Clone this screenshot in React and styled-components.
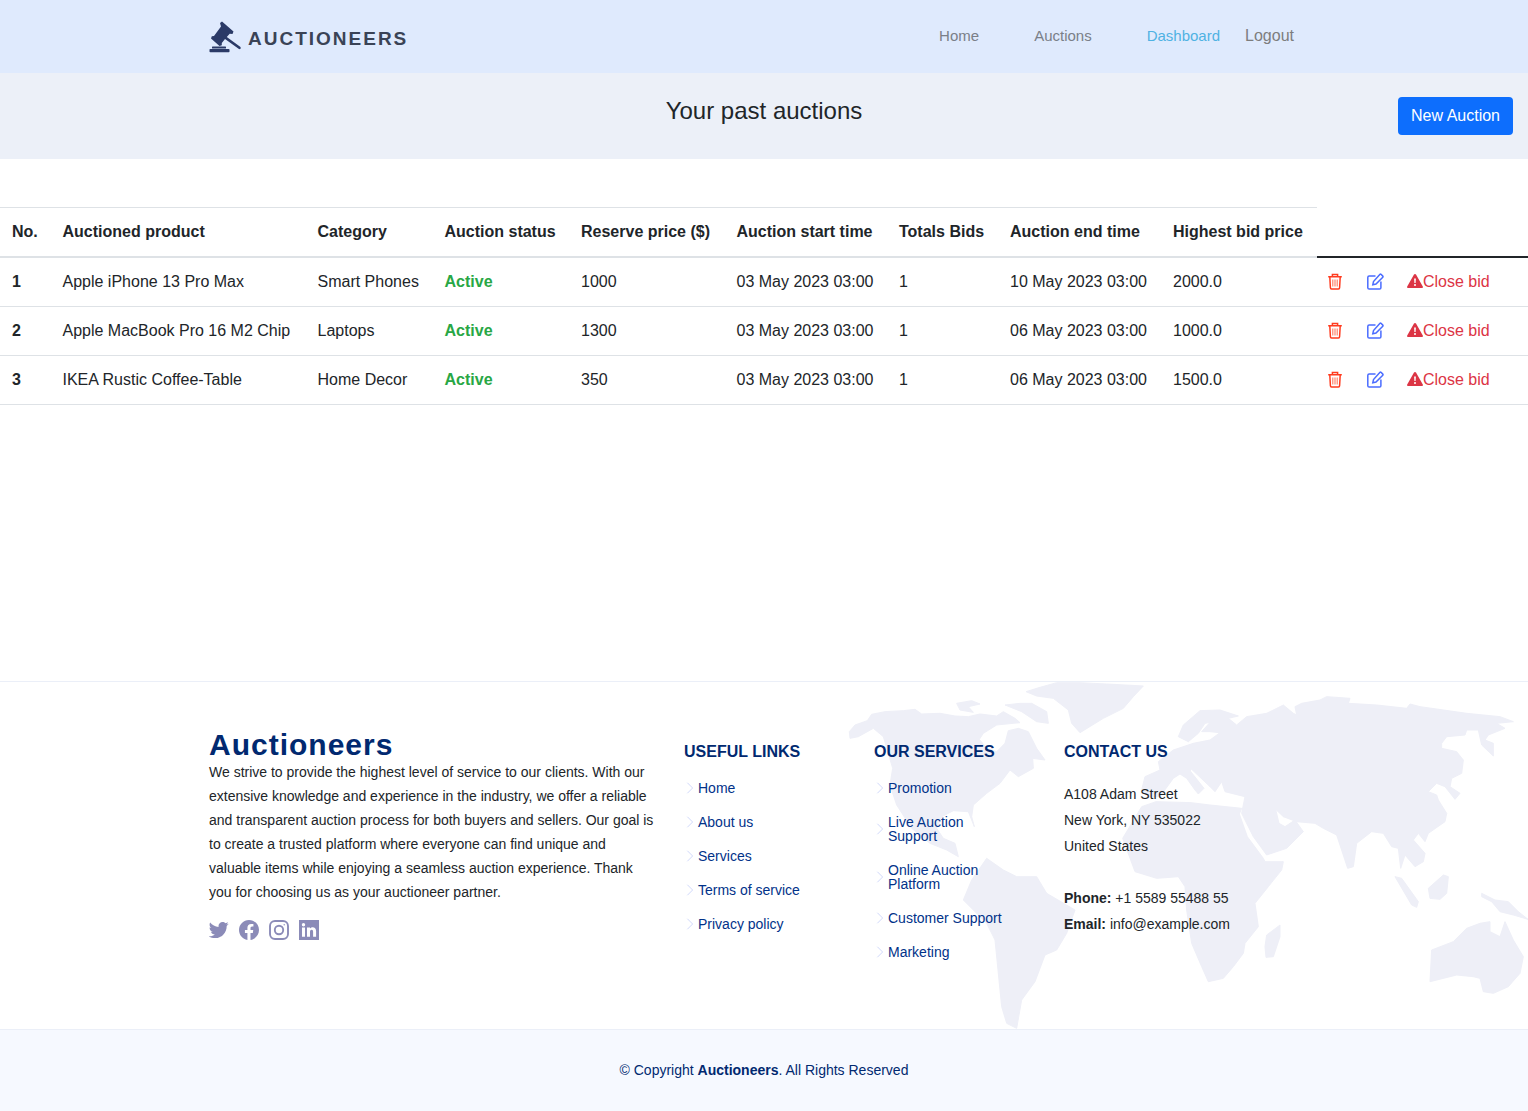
import React from 'react';
import styled, { createGlobalStyle } from 'styled-components';

const Global = createGlobalStyle`
  * { box-sizing: border-box; }
  body { margin: 0; background: #fff; color: #212529; font-family: "Liberation Sans", Arial, sans-serif; font-size: 16px; line-height: 1.5; }
`;
const Page = styled.div`display:flex;flex-direction:column;min-height:1111px;`;
const Header = styled.header`height:73px;background:#dfeafd;display:flex;align-items:center;padding:0 234px 0 204px;`;
const Logo = styled.div`display:flex;align-items:center;margin-right:auto;`;
const LogoText = styled.span`font-size:19px;font-weight:700;letter-spacing:2px;color:#3a4356;line-height:24px;margin-top:4px;`;
const Nav = styled.nav`display:flex;align-items:center;margin-top:-1px;`;
const NavLink = styled.a`font-size:15px;line-height:20px;color:${p=>p.$active?'#4fb2e3':'#7a7f88'};margin-right:${p=>p.$gap}px;`;
const LogoutLink = styled.a`font-size:16px;color:#7d7d7d;line-height:24px;`;
const TitleBand = styled.section`height:86px;background:#ecf0f8;position:relative;display:flex;justify-content:center;padding-top:21px;`;
const Title = styled.h1`margin:0;font-size:24px;font-weight:400;line-height:33px;color:#212529;`;
const NewButton = styled.button`position:absolute;right:15px;top:24px;height:38px;padding:0 13px;border:0;border-radius:4px;background:#0d6efd;color:#fff;font:16px "Liberation Sans",Arial,sans-serif;`;
const Main = styled.main`padding-top:48px;height:522px;`;
const Table = styled.table`width:1528px;table-layout:fixed;border-collapse:collapse;`;
const Column = styled.col`width:${p=>p.$w}px;`;
const Th = styled.th`padding:12px;text-align:left;font-weight:700;white-space:nowrap;border-top:1px solid #dee2e6;border-bottom:2px solid #dee2e6;line-height:24px;`;
const Body = styled.tbody`border-top:2px solid #212529;`;
const Row = styled.tr`border-bottom:1px solid #dee2e6;`;
const Td = styled.td`padding:12px;white-space:nowrap;line-height:24px;`;
const Strong = styled(Td)`font-weight:700;`;
const Status = styled(Td)`font-weight:700;color:#28a745;`;
const IconCell = styled(Td)`padding:0 0 2px ${p=>p.$pad}px;vertical-align:middle;line-height:0;`;
const IconWrap = styled.span`display:block;`;
const CloseBid = styled.a`display:flex;align-items:center;color:#dc3545;height:24px;`;
const Footer = styled.footer`position:relative;border-top:1px solid #ebeff8;overflow:hidden;`;
const MapArt = styled.svg`position:absolute;left:840px;top:-2px;width:688px;height:350px;`;
const FooterTop = styled.div`position:relative;height:347px;display:grid;grid-template-columns:475px 190px 190px 240px;padding:45px 0 0 209px;`;
const Brand = styled.div`padding-top:1px;`;
const BrandName = styled.h2`margin:0 0 -1px;font-size:30px;font-weight:700;letter-spacing:1px;line-height:33px;color:#012970;`;
const BrandText = styled.p`margin:0;width:450px;font-size:14px;line-height:24px;color:#212529;`;
const Socials = styled.div`display:flex;gap:10px;margin-top:16px;color:#8b8bb8;`;
const Col = styled.div`padding-top:15px;`;
const ColTitle = styled.h4`margin:0 0 10px;font-size:16px;font-weight:700;line-height:19px;color:#012970;`;
const List = styled.ul`list-style:none;margin:0;padding:0;`;
const Item = styled.li`display:flex;align-items:center;padding:10px 0;`;
const Chevron = styled.svg`width:14px;height:14px;flex:none;color:#cfd6fa;margin-left:-1px;margin-right:1px;`;
const ItemLink = styled.a`font-size:14px;line-height:14px;color:#013289;max-width:${p=>p.$wide?130:100}px;`;
const Contact = styled.p`margin:0;font-size:14px;line-height:26px;color:#212529;padding-top:10px;`;
const ContactBold = styled.strong`font-weight:700;`;
const Copy = styled.div`height:82px;border-top:1px solid #ebeff8;background:#f6f9ff;display:flex;align-items:center;justify-content:center;font-size:14px;color:#012970;`;

const Gavel = () => (
  <svg width="44" height="40" viewBox="0 0 44 40" fill="#2b3a67">
    <path d="M18 4.500L29.500 14.500 28.500 17 25.700 16.800 22.800 20 36.500 30 36.800 31.500 35.300 32.200 21 22 17.800 26 17.800 28.300 15.500 29 7 21.500 7.800 19.200 10 19 17 9.500 16 6Z" />
    <rect x="8" y="29.500" width="14" height="2" rx=".6" />
    <rect x="5.500" y="32" width="20" height="3.200" rx=".8" />
  </svg>
);
const Trash = () => (
  <svg width="16" height="17" viewBox="0 0 16 17" fill="none" stroke="#ff3b1f" strokeWidth="1.500"><path d="M1.200 3.700h13.600M5.400 3.500V1.500h5.200v2M2.800 4l.6 10.800c0 .7.500 1.200 1.200 1.200h6.800c.7 0 1.200-.5 1.200-1.200L13.200 4"/><path strokeWidth="1.100" stroke="#ff7a5f" d="M5.800 6.500v7M8 6.500v7M10.200 6.500v7"/></svg>
);
const Edit = () => (
  <svg width="17" height="17" viewBox="0 0 17 17" fill="none" stroke="#4a6cff" strokeWidth="1.500"><path d="M8.500 3H2.200C1.400 3 .8 3.600.8 4.400v10.400c0 .7.600 1.300 1.400 1.300h10.400c.7 0 1.300-.6 1.300-1.300V8.500"/><path d="M14 1.300l1.800 1.800c.3.300.3.800 0 1.100L9 11l-3.200.7.700-3.200 6.500-7.200c.3-.3.700-.3 1 0z"/></svg>
);
const Warn = () => (
  <svg width="16" height="16" viewBox="0 1 16 16" fill="#dc3545"><path fillRule="evenodd" d="M8 1c.4 0 .8.2 1 .6l6.800 11.800c.4.700-.1 1.600-1 1.600H1.200c-.9 0-1.400-.9-1-1.600L7 1.600c.2-.4.600-.6 1-.6zM7.100 5.500l.3 4.600h1.200l.3-4.600H7.100zM8 11a1 1 0 100 2 1 1 0 000-2z"/></svg>
);
const Twitter = () => (<svg width="20" height="20" viewBox="0 0 24 24" fill="currentColor"><path d="M23.600 4.600c-.9.400-1.800.700-2.800.800 1-.6 1.800-1.600 2.100-2.700-.9.600-2 1-3.100 1.200C18.900 2.900 17.600 2.300 16.300 2.300c-2.700 0-4.900 2.200-4.900 4.900 0 .4 0 .8.100 1.100C7.400 8.100 3.800 6.100 1.400 3.100.9 3.800.7 4.700.7 5.600c0 1.700.9 3.200 2.200 4.100-.8 0-1.600-.2-2.200-.6v.1c0 2.400 1.700 4.400 3.900 4.800-.7.200-1.500.2-2.200.1.600 2 2.400 3.400 4.600 3.400-1.700 1.300-3.800 2.100-6.100 2.100-.4 0-.8 0-1.200-.1 2.200 1.400 4.800 2.200 7.500 2.200 9.100 0 14-7.500 14-14v-.6c1-.7 1.800-1.600 2.500-2.500z"/></svg>);
const Facebook = () => (<svg width="20" height="20" viewBox="0 0 24 24" fill="currentColor"><path d="M24 12C24 5.400 18.600 0 12 0S0 5.400 0 12c0 6 4.400 11 10.100 11.900v-8.400H7.100V12h3V9.400c0-3 1.800-4.700 4.500-4.700 1.300 0 2.700.2 2.700.2v3h-1.500c-1.500 0-2 .9-2 1.900V12h3.300l-.5 3.500h-2.800v8.400C19.600 23 24 18 24 12z"/></svg>);
const Instagram = () => (<svg width="20" height="20" viewBox="0 0 20 20" fill="none" stroke="currentColor" strokeWidth="1.900"><rect x="1" y="1" width="18" height="18" rx="5"/><circle cx="10" cy="10" r="4.200"/><circle cx="15.200" cy="4.800" r=".7" fill="currentColor" stroke="none"/></svg>);
const Linkedin = () => (<svg width="20" height="20" viewBox="0 0 20 20" fill="currentColor"><path fillRule="evenodd" d="M0 0h20v20H0zM3 7.500v9.300h3V7.500zM4.500 3a1.700 1.700 0 100 3.400 1.700 1.700 0 000-3.400zM8 7.500v9.300h3v-4.900c0-1.300.6-2.100 1.700-2.100 1 0 1.400.7 1.400 2v5h3v-5.600c0-2.700-1.400-4-3.400-4-1.300 0-2.200.6-2.700 1.400V7.500z"/></svg>);
const Chev = () => (<Chevron viewBox="0 0 16 16" fill="none" stroke="currentColor" strokeWidth="1.100"><path d="M5 2l6 6-6 6"/></Chevron>);

const MAP = [
  'M28 155L45 135 82 122 95 103 135 95 190 92 225 88 245 102 300 100 345 108 385 110 420 102 470 108 490 95 525 115 540 128 470 135 430 160 418 178 440 205 470 215 495 190 505 152 535 145 565 155 590 205 615 240 578 235 580 265 535 290 510 270 480 310 440 340 400 375 395 410 403 440 385 395 340 392 305 410 290 445 310 475 345 490 355 530 320 510 270 490 215 445 170 375 150 315 158 265 130 170 100 145 55 170 30 175Z',
  'M350 70L395 62 420 72 385 80 400 97 360 90Z',
  'M495 75L540 70 575 70 620 95 625 130 590 125 545 95Z',
  'M558 35L600 22 650 8 720 8 800 12 910 18 880 50 850 85 790 115 720 158 695 130 685 90 640 55 590 48Z',
  'M370 660L395 600 440 535 490 570 530 590 590 590 620 640 705 690 680 760 650 810 615 825 585 905 545 960 530 1045 500 1030 485 980 465 780 440 730Z',
  'M1015 170L1030 135 1080 92 1140 90 1195 108 1165 115 1190 135 1220 110 1280 100 1330 75 1360 100 1370 105 1365 80 1385 70 1440 60 1460 50 1530 55 1525 70 1610 75 1700 85 1710 72 1740 80 1880 100 1980 110 2020 125 1970 130 1995 145 1945 165 1935 180 1960 190 1960 228 1925 195 1915 150 1880 150 1875 165 1820 170 1805 190 1805 205 1850 215 1870 240 1865 280 1835 295 1830 320 1860 340 1845 358 1815 320 1790 310 1765 335 1790 345 1795 360 1820 400 1815 425 1765 460 1755 485 1735 460 1720 480 1755 520 1750 545 1725 560 1695 525 1682 565 1675 505 1655 500 1630 460 1595 455 1550 490 1540 560 1523 565 1490 465 1450 445 1425 430 1370 425 1330 410 1307 388 1317 430 1335 440 1365 420 1390 455 1340 505 1280 525 1240 470 1205 400 1215 350 1155 335 1145 305 1125 335 1110 320 1055 268 1050 272 1092 325 1075 342 1065 330 1040 295 1020 282 1000 295 960 350 925 350 905 330 915 290 960 270 955 245 1000 210 1060 190 1110 180 1140 158 1110 155 1085 155 1110 127 1095 130 1075 160 1045 185Z',
  'M948 365L1053 368 1110 375 1205 385 1198 402 1222 470 1270 535 1275 545 1330 545 1325 570 1285 620 1245 670 1255 740 1215 790 1210 820 1180 860 1150 895 1105 905 1085 860 1055 790 1040 690 1035 620 1015 590 950 595 885 575 848 475 905 380Z',
  'M1280 765L1320 735 1320 770 1300 830 1278 832 1275 800Z',
  'M1665 590L1685 595 1735 665 1730 682 1715 675Z',
  'M1765 625L1810 585 1825 590 1820 640 1800 658 1770 655Z',
  'M1925 640L1965 660 2005 665 2035 695 2064 718 2020 705 1980 695 1955 665 1925 650Z',
  'M1770 905L1775 810 1840 785 1880 745 1920 730 1950 725 1950 755 1980 770 1995 725 2020 780 2050 830 2040 880 2005 920 1960 940 1930 935 1920 895 1900 890 1850 885Z',
].join(' ');

const rows = [
  ['1','Apple iPhone 13 Pro Max','Smart Phones','1000','10 May 2023 03:00','2000.0'],
  ['2','Apple MacBook Pro 16 M2 Chip','Laptops','1300','06 May 2023 03:00','1000.0'],
  ['3','IKEA Rustic Coffee-Table','Home Decor','350','06 May 2023 03:00','1500.0'],
];
const heads = ['No.','Auctioned product','Category','Auction status','Reserve price ($)','Auction start time','Totals Bids','Auction end time','Highest bid price'];
const widths = [50.5,255,127,136.5,155.5,162.5,111,163,156,38,40,133];
const useful = ['Home','About us','Services','Terms of service','Privacy policy'];
const services = ['Promotion','Live Auction Support','Online Auction Platform','Customer Support','Marketing'];

export default function App() {
  return (
    <Page>
      <Global />
      <Header>
        <Logo><Gavel /><LogoText>AUCTIONEERS</LogoText></Logo>
        <Nav>
          <NavLink $gap={55}>Home</NavLink>
          <NavLink $gap={55}>Auctions</NavLink>
          <NavLink $gap={25} $active>Dashboard</NavLink>
          <LogoutLink>Logout</LogoutLink>
        </Nav>
      </Header>
      <TitleBand>
        <Title>Your past auctions</Title>
        <NewButton>New Auction</NewButton>
      </TitleBand>
      <Main>
        <Table>
          <colgroup>{widths.map((w,i)=><Column key={i} $w={w} />)}</colgroup>
          <thead><tr>{heads.map(h=><Th key={h}>{h}</Th>)}</tr></thead>
          <Body>
            {rows.map(r=>(
              <Row key={r[0]}>
                <Strong>{r[0]}</Strong>
                <Td>{r[1]}</Td>
                <Td>{r[2]}</Td>
                <Status>Active</Status>
                <Td>{r[3]}</Td>
                <Td>03 May 2023 03:00</Td>
                <Td>1</Td>
                <Td>{r[4]}</Td>
                <Td>{r[5]}</Td>
                <IconCell $pad={10}><IconWrap><Trash /></IconWrap></IconCell>
                <IconCell $pad={12}><IconWrap><Edit /></IconWrap></IconCell>
                <Td><CloseBid><Warn />Close bid</CloseBid></Td>
              </Row>
            ))}
          </Body>
        </Table>
      </Main>
      <Footer>
        <MapArt viewBox="0 0 2064 1050"><path d={MAP} fill="#eeeff7" stroke="#eeeff7" strokeWidth="3" strokeLinejoin="round" /></MapArt>
        <FooterTop>
          <Brand>
            <BrandName>Auctioneers</BrandName>
            <BrandText>We strive to provide the highest level of service to our clients. With our extensive knowledge and experience in the industry, we offer a reliable and transparent auction process for both buyers and sellers. Our goal is to create a trusted platform where everyone can find unique and valuable items while enjoying a seamless auction experience. Thank you for choosing us as your auctioneer partner.</BrandText>
            <Socials><Twitter /><Facebook /><Instagram /><Linkedin /></Socials>
          </Brand>
          <Col>
            <ColTitle>USEFUL LINKS</ColTitle>
            <List>{useful.map(u=><Item key={u}><Chev /><ItemLink $wide>{u}</ItemLink></Item>)}</List>
          </Col>
          <Col>
            <ColTitle>OUR SERVICES</ColTitle>
            <List>{services.map(u=><Item key={u}><Chev /><ItemLink $wide={u==='Customer Support'}>{u}</ItemLink></Item>)}</List>
          </Col>
          <Col>
            <ColTitle>CONTACT US</ColTitle>
            <Contact>A108 Adam Street<br/>New York, NY 535022<br/>United States<br/><br/><ContactBold>Phone:</ContactBold> +1 5589 55488 55<br/><ContactBold>Email:</ContactBold> info@example.com</Contact>
          </Col>
        </FooterTop>
        <Copy><span>© Copyright <strong>Auctioneers</strong>. All Rights Reserved</span></Copy>
      </Footer>
    </Page>
  );
}
